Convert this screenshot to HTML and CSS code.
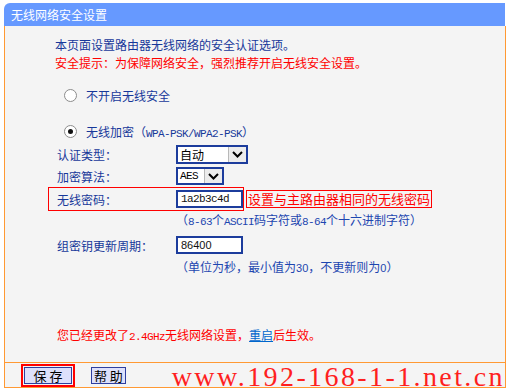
FILE: index.html
```html
<!DOCTYPE html>
<html lang="zh-CN">
<head>
<meta charset="utf-8">
<title>无线网络安全设置</title>
<link rel="stylesheet" href="styles.css">
</head>
<body>
<div class="frame">
  <div class="title">无线网络安全设置</div>
  <div class="content">
    <p class="intro">本页面设置路由器无线网络的安全认证选项。</p>
    <p class="warn">安全提示：为保障网络安全，强烈推荐开启无线安全设置。</p>
    <div class="radio-row r1"><span class="radio"></span><span>不开启无线安全</span></div>
    <div class="radio-row r2"><span class="radio checked"></span><span>无线加密<span class="paren">（</span><span class="mono">WPA-PSK/WPA2-PSK</span><span class="paren">）</span></span></div>
    <div class="row r-auth">
      <span class="label">认证类型：</span>
      <span class="select s-auth"><span class="val">自动</span><span class="arrow"><svg width="11" height="7" viewBox="0 0 11 7"><polyline points="1,1 5.5,5.5 10,1" fill="none" stroke="#000" stroke-width="2"/></svg></span></span>
    </div>
    <div class="row r-aes">
      <span class="label">加密算法：</span>
      <span class="select s-aes"><span class="val mono">AES</span><span class="arrow"><svg width="11" height="7" viewBox="0 0 11 7"><polyline points="1,1 5.5,5.5 10,1" fill="none" stroke="#000" stroke-width="2"/></svg></span></span>
    </div>
    <div class="pw-row">
      <div class="redbox">
        <span class="label">无线密码：</span>
        <span class="input mono">1a2b3c4d</span>
      </div>
      <span class="note">设置与主路由器相同的无线密码</span>
    </div>
    <p class="hint h1">（<span class="mono">8-63</span>个<span class="mono">ASCII</span>码字符或<span class="mono">8-64</span>个十六进制字符）</p>
    <div class="row r-period">
      <span class="label">组密钥更新周期：</span>
      <span class="input num">86400</span>
    </div>
    <p class="hint h2">（单位为秒，最小值为<span class="num-t">30</span>，不更新则为<span class="num-t">0</span>）</p>
    <p class="changed">您已经更改了<span class="mono">2.4GHz</span>无线网络设置，<a class="link">重启</a>后生效。</p>
  </div>
  <div class="footer">
    <span class="savebox"><span class="btn">保 存</span></span>
    <span class="btn help">帮 助</span>
    <span class="watermark">www.192-168-1-1.net.cn</span>
  </div>
</div>
</body>
</html>
```

FILE: styles.css
```css
html, body {
  margin: 0;
  padding: 0;
  background: #ffffff;
  overflow: hidden;
}
body {
  font-family: "Noto Sans CJK SC", "Noto Sans", sans-serif;
  font-size: 12px;
  color: #17389a;
}
p { margin: 0; }

.frame {
  margin: 3px 0 0 4px;
  width: 502px;
}

.title {
  height: 23px;
  line-height: 23px;
  margin-right: 1px;
  padding-left: 7px;
  background: #6699ff;
  color: #ffffff;
  font-size: 12px;
  border-top-left-radius: 6px;
}

.content {
  box-sizing: border-box;
  height: 336px;
  padding: 10px 0 0 50px;
  background: #f4f4f4;
  border-left: 1px solid #ff9933;
  border-right: 1px solid #ff9933;
}

.intro, .warn { line-height: 18px; }
.warn { color: #ff0000; }

.mono {
  font-family: "Liberation Mono", monospace;
  font-size: 11px;
  letter-spacing: -0.6px;
}

.radio-row {
  display: flex;
  align-items: center;
  height: 18px;
  margin-left: 9px;
  gap: 9px;
}
.r1 { margin-top: 14px; }
.r2 { margin-top: 18px; }
.radio {
  box-sizing: border-box;
  width: 13px;
  height: 13px;
  border: 1px solid #8c8c8c;
  border-radius: 50%;
  background: #ffffff;
  display: flex;
  align-items: center;
  justify-content: center;
}
.radio.checked::after {
  content: "";
  width: 5px;
  height: 5px;
  border-radius: 50%;
  background: #111;
}
.paren { font-size: 12px; }

.row {
  display: flex;
  align-items: center;
  margin-left: 2px;
}
.label { width: 119px; flex: none; }
.r-auth { margin-top: 5px; height: 19px; }
.r-aes { margin-top: 3px; height: 18px; }
.r-period { margin-top: 6px; height: 18px; }

.select {
  box-sizing: border-box;
  display: flex;
  align-items: stretch;
  border: 2px solid #1c3c9c;
  background: #ffffff;
  color: #000;
}
.s-auth { width: 72px; height: 19px; }
.s-aes { width: 48px; height: 18px; }
.select .val {
  flex: 1;
  padding-left: 2px;
  display: flex;
  align-items: center;
}
.s-auth .val { font-size: 12px; }
.arrow {
  box-sizing: border-box;
  width: 18px;
  display: flex;
  align-items: center;
  justify-content: center;
  background: #ececec;
  border-left: 1px solid #b8b8b8;
}

.input {
  box-sizing: border-box;
  display: flex;
  align-items: center;
  width: 67px;
  height: 18px;
  padding-left: 3px;
  border: 2px solid #1c3c9c;
  background: #ffffff;
  color: #111;
}
.input.num {
  font-family: "Liberation Sans", sans-serif;
  font-size: 11px;
}

.pw-row {
  display: flex;
  align-items: center;
  margin: 2px 0 0 -7px;
  height: 24px;
}
.redbox {
  box-sizing: border-box;
  display: flex;
  align-items: center;
  width: 196px;
  height: 24px;
  padding-left: 8px;
  border: 1px solid #ff0000;
}
.note {
  box-sizing: border-box;
  margin-left: 2px;
  height: 18px;
  line-height: 16px;
  padding: 0 1px;
  border: 1px solid #ff0000;
  color: #ff0000;
  font-size: 13px;
}

.hint {
  line-height: 16px;
  margin-left: 121px;
  color: #1d46b0;
}
.h1 { margin-top: 1px; }
.h2 { margin-top: 5px; }
.num-t {
  font-family: "Liberation Sans", sans-serif;
  font-size: 11px;
}

.changed {
  margin: 51px 0 0 2px;
  line-height: 16px;
  color: #ff0000;
}
.link {
  color: #0066cc;
  text-decoration: underline;
}

.footer {
  box-sizing: border-box;
  display: flex;
  align-items: center;
  height: 26px;
  padding-left: 16px;
  background: #f4f4f4;
  border: 1px solid #ff9933;
  white-space: nowrap;
}
.savebox {
  box-sizing: border-box;
  display: flex;
  padding: 1px;
  border: 2px solid #ff0000;
}
.btn {
  box-sizing: border-box;
  display: flex;
  align-items: center;
  justify-content: center;
  width: 48px;
  height: 17px;
  border: 1px solid #2e3e9f;
  background: #dde0fb;
  color: #000;
  font-size: 13px;
}
.help { margin-left: 16px; }
.watermark {
  margin-left: 46px;
  font-family: "Liberation Serif", serif;
  font-size: 28px;
  line-height: 24px;
  letter-spacing: 2.4px;
  color: #ff1f1f;
  position: relative;
  top: 2px;
}
```
